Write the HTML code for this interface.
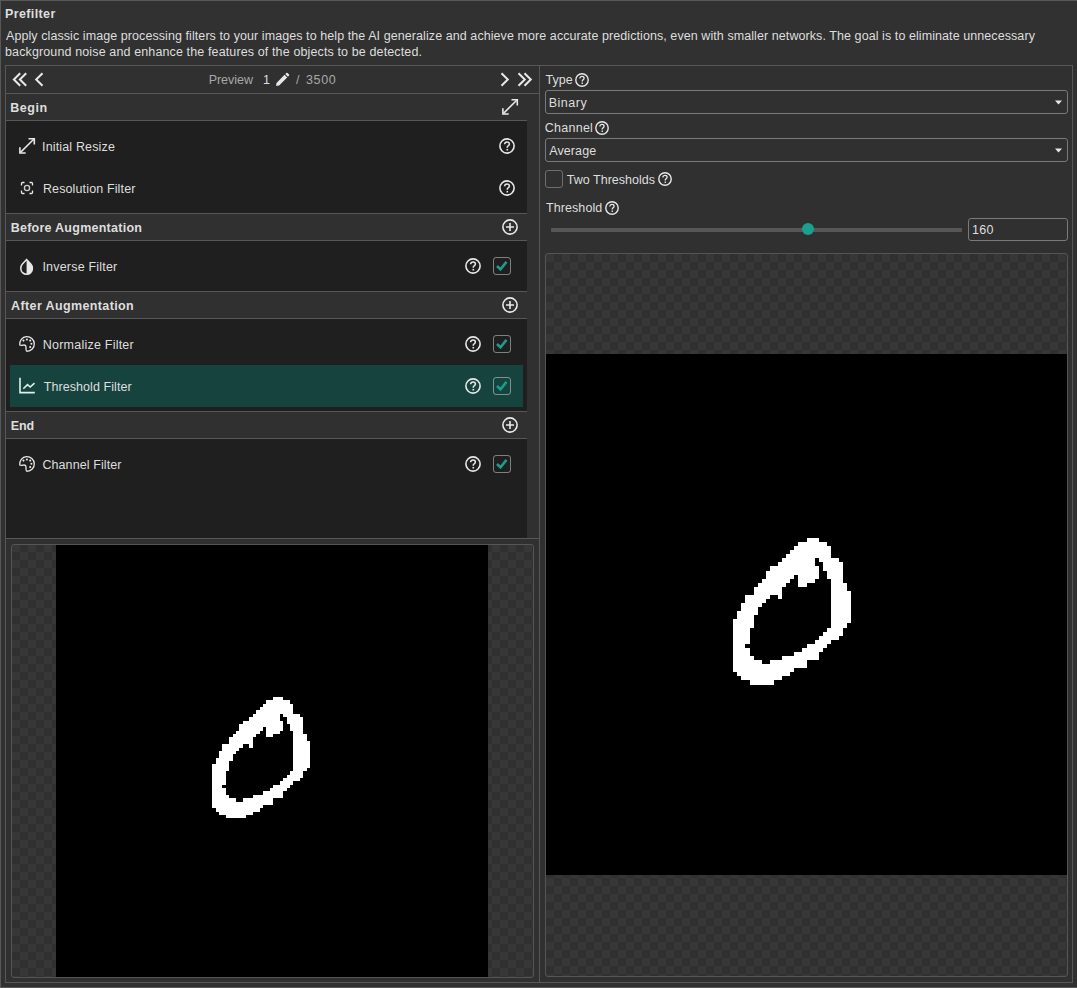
<!DOCTYPE html><html><head><meta charset="utf-8"><style>html,body{margin:0;padding:0;}body{width:1077px;height:988px;overflow:hidden;background:#313131;position:relative;font-family:"Liberation Sans",sans-serif;color:#dedede;}.a{position:absolute;}.t{position:absolute;white-space:nowrap;font-size:12.5px;line-height:16px;}svg{position:absolute;overflow:visible;}.chk{position:absolute;width:16px;height:16px;border:1px solid rgba(255,255,255,0.43);border-radius:3px;}</style></head><body>
<div class="a" style="left:0px;top:0px;width:1077px;height:1px;background:#585858;"></div>
<div class="a" style="left:0px;top:0px;width:1px;height:988px;background:#585858;"></div>
<div class="a" style="left:0px;top:987px;width:1077px;height:1px;background:#585858;"></div>
<div class="t" style="left:5.0px;top:6px;letter-spacing:0.375px;font-weight:bold;">Prefilter</div>
<div class="t" style="left:6.0px;top:28px;letter-spacing:0.077px;">Apply classic image processing filters to your images to help the AI generalize and achieve more accurate predictions, even with smaller networks. The goal is to eliminate unnecessary</div>
<div class="t" style="left:5.0px;top:44px;letter-spacing:0.127px;">background noise and enhance the features of the objects to be detected.</div>
<div class="a" style="left:5px;top:65px;width:1066px;height:916px;border:1px solid #575757;background:#303030"></div>
<div class="a" style="left:539px;top:66px;width:1px;height:916px;background:#575757;"></div>
<div class="a" style="left:6px;top:93px;width:533px;height:1px;background:#575757;"></div>
<svg style="left:10px;top:70px" width="36" height="20" viewBox="0 0 36 20"><path d="M10.2 3.3 L3.9 9.5 L10.2 15.7 M16.2 3.3 L9.9 9.5 L16.2 15.7" fill="none" stroke="#e8e8e8" stroke-width="2"/><path d="M32.5 3.3 L26.2 9.5 L32.5 15.7" fill="none" stroke="#e8e8e8" stroke-width="2"/></svg>
<svg style="left:498px;top:70px" width="36" height="20" viewBox="0 0 36 20"><path d="M3.5 3.3 L9.8 9.5 L3.5 15.7" fill="none" stroke="#e8e8e8" stroke-width="2"/><path d="M20.5 3.3 L26.8 9.5 L20.5 15.7 M26.5 3.3 L32.8 9.5 L26.5 15.7" fill="none" stroke="#e8e8e8" stroke-width="2"/></svg>
<div class="t" style="left:208.7px;top:72px;letter-spacing:-0.033px;color:#a8a8a8;">Preview</div>
<div class="t" style="left:263.0px;top:72px;">1</div>
<svg style="left:275px;top:71.5px" width="15" height="15" viewBox="0 0 16 16"><path d="M1.2 14.8 L1.6 11.6 L10.2 3 L13 5.8 L4.4 14.4 Z M11 2.2 L12.2 1 Q12.8 0.5 13.4 1 L15 2.6 Q15.5 3.2 15 3.8 L13.8 5 Z" fill="#e8e8e8"/></svg>
<div class="t" style="left:296.0px;top:72px;color:#a8a8a8;">/</div>
<div class="t" style="left:306.0px;top:72px;letter-spacing:0.667px;color:#a8a8a8;">3500</div>
<div class="a" style="left:6px;top:94px;width:533px;height:26px;background:#303030;"></div>
<div class="t" style="left:10.3px;top:100px;letter-spacing:0.5px;font-weight:bold;">Begin</div>
<svg style="left:502px;top:99px" width="17" height="17" viewBox="0 0 17 17"><path d="M1.5 14.4 L14.7 1.2" stroke="#e8e8e8" stroke-width="1.5"/><path d="M9.5 0.8 H15.3 V6.6" fill="none" stroke="#e8e8e8" stroke-width="1.6"/><path d="M0.9 9.3 V15 H6.7" fill="none" stroke="#e8e8e8" stroke-width="1.6"/></svg>
<div class="a" style="left:6px;top:120px;width:521px;height:1px;background:#575757;"></div>
<div class="a" style="left:6px;top:121px;width:521px;height:92px;background:#1f1f1f;"></div>
<svg style="left:19px;top:138px" width="17" height="17" viewBox="0 0 17 17"><path d="M1.5 14.4 L14.7 1.2" stroke="#e8e8e8" stroke-width="1.5"/><path d="M9.5 0.8 H15.3 V6.6" fill="none" stroke="#e8e8e8" stroke-width="1.6"/><path d="M0.9 9.3 V15 H6.7" fill="none" stroke="#e8e8e8" stroke-width="1.6"/></svg>
<div class="t" style="left:42.1px;top:139px;letter-spacing:0.146px;">Initial Resize</div>
<svg style="left:499.0px;top:138.0px" width="16" height="16" viewBox="0 0 16 16"><circle cx="8" cy="8" r="7.1" fill="none" stroke="#e8e8e8" stroke-width="1.6"/><path d="M5.6 6.2 C5.6 4.6 6.7 3.9 8 3.9 C9.4 3.9 10.4 4.8 10.4 6 C10.4 7.5 8.6 7.8 8.3 9 L8.3 9.8" fill="none" stroke="#e8e8e8" stroke-width="1.5"/><rect x="7.5" y="10.9" width="1.6" height="1.6" fill="#e8e8e8"/></svg>
<svg style="left:19px;top:180px" width="16" height="16" viewBox="0 0 16 16"><path d="M2.5 5.5 V3.5 Q2.5 2.5 3.5 2.5 H5.5 M10.5 2.5 H12.5 Q13.5 2.5 13.5 3.5 V5.5 M13.5 10.5 V12.5 Q13.5 13.5 12.5 13.5 H10.5 M5.5 13.5 H3.5 Q2.5 13.5 2.5 12.5 V10.5" fill="none" stroke="#e8e8e8" stroke-width="1.3"/><circle cx="8" cy="8" r="2.6" fill="none" stroke="#cfcfcf" stroke-width="1.3"/></svg>
<div class="t" style="left:42.9px;top:181px;letter-spacing:0.137px;">Resolution Filter</div>
<svg style="left:499.0px;top:180.0px" width="16" height="16" viewBox="0 0 16 16"><circle cx="8" cy="8" r="7.1" fill="none" stroke="#e8e8e8" stroke-width="1.6"/><path d="M5.6 6.2 C5.6 4.6 6.7 3.9 8 3.9 C9.4 3.9 10.4 4.8 10.4 6 C10.4 7.5 8.6 7.8 8.3 9 L8.3 9.8" fill="none" stroke="#e8e8e8" stroke-width="1.5"/><rect x="7.5" y="10.9" width="1.6" height="1.6" fill="#e8e8e8"/></svg>
<div class="a" style="left:6px;top:213px;width:521px;height:1px;background:#575757;"></div>
<div class="a" style="left:6px;top:214px;width:533px;height:26px;background:#303030;"></div>
<div class="t" style="left:10.7px;top:220px;letter-spacing:0.256px;font-weight:bold;">Before Augmentation</div>
<svg style="left:502px;top:219px" width="16" height="16" viewBox="0 0 16 16"><circle cx="8" cy="8" r="7.1" fill="none" stroke="#e8e8e8" stroke-width="1.6"/><path d="M8 4 V12 M4 8 H12" stroke="#e8e8e8" stroke-width="1.6"/></svg>
<div class="a" style="left:6px;top:240px;width:521px;height:1px;background:#575757;"></div>
<div class="a" style="left:6px;top:241px;width:521px;height:50px;background:#1f1f1f;"></div>
<svg style="left:19px;top:258px" width="16" height="18" viewBox="0 0 16 18"><path d="M7.6 1.6 L3.4 5.9 Q1.8 7.6 1.8 10.4 Q1.8 13 3.5 14.6 Q5.2 16.25 7.6 16.25 Q10 16.25 11.7 14.6 Q13.4 13 13.4 10.4 Q13.4 7.6 11.8 5.9 Z" fill="none" stroke="#e8e8e8" stroke-width="1.5"/><path d="M7.6 1.6 L11.8 5.9 Q13.4 7.6 13.4 10.4 Q13.4 13 11.7 14.6 Q10 16.25 7.6 16.25 Z" fill="#e8e8e8"/></svg>
<div class="t" style="left:42.4px;top:259px;letter-spacing:0.2px;">Inverse Filter</div>
<svg style="left:465.0px;top:258.0px" width="16" height="16" viewBox="0 0 16 16"><circle cx="8" cy="8" r="7.1" fill="none" stroke="#e8e8e8" stroke-width="1.6"/><path d="M5.6 6.2 C5.6 4.6 6.7 3.9 8 3.9 C9.4 3.9 10.4 4.8 10.4 6 C10.4 7.5 8.6 7.8 8.3 9 L8.3 9.8" fill="none" stroke="#e8e8e8" stroke-width="1.5"/><rect x="7.5" y="10.9" width="1.6" height="1.6" fill="#e8e8e8"/></svg>
<div class="chk" style="left:493px;top:257px;"></div>
<svg style="left:493px;top:257px" width="18" height="18" viewBox="0 0 18 18"><path d="M4 9 L7.5 12.3 L13.5 4.9" fill="none" stroke="#1c9c8c" stroke-width="2.6"/></svg>
<div class="a" style="left:6px;top:291px;width:521px;height:1px;background:#575757;"></div>
<div class="a" style="left:6px;top:292px;width:533px;height:26px;background:#303030;"></div>
<div class="t" style="left:11.1px;top:298px;letter-spacing:0.376px;font-weight:bold;">After Augmentation</div>
<svg style="left:502px;top:297px" width="16" height="16" viewBox="0 0 16 16"><circle cx="8" cy="8" r="7.1" fill="none" stroke="#e8e8e8" stroke-width="1.6"/><path d="M8 4 V12 M4 8 H12" stroke="#e8e8e8" stroke-width="1.6"/></svg>
<div class="a" style="left:6px;top:318px;width:521px;height:1px;background:#575757;"></div>
<div class="a" style="left:6px;top:319px;width:521px;height:92px;background:#1f1f1f;"></div>
<svg style="left:19px;top:336px" width="17" height="17" viewBox="0 0 17 17"><path d="M8 15.3 A7.3 7.3 0 1 0 0.75 8.9 C1.3 9.7 2.6 9.4 4.2 9.1 C5.9 8.8 7.1 9.4 7 11.1 C6.9 12.6 6.7 14.6 8 15.3 Z" fill="none" stroke="#e8e8e8" stroke-width="1.3"/><circle cx="4.5" cy="4.6" r="1.05" fill="#e8e8e8"/><circle cx="7.9" cy="3.5" r="1.05" fill="#e8e8e8"/><circle cx="11.2" cy="4.6" r="1.05" fill="#e8e8e8"/><circle cx="12.4" cy="7.8" r="1.05" fill="#e8e8e8"/><circle cx="11.2" cy="11.1" r="1.05" fill="#e8e8e8"/></svg>
<div class="t" style="left:42.8px;top:337px;letter-spacing:0.227px;">Normalize Filter</div>
<svg style="left:465.0px;top:336.0px" width="16" height="16" viewBox="0 0 16 16"><circle cx="8" cy="8" r="7.1" fill="none" stroke="#e8e8e8" stroke-width="1.6"/><path d="M5.6 6.2 C5.6 4.6 6.7 3.9 8 3.9 C9.4 3.9 10.4 4.8 10.4 6 C10.4 7.5 8.6 7.8 8.3 9 L8.3 9.8" fill="none" stroke="#e8e8e8" stroke-width="1.5"/><rect x="7.5" y="10.9" width="1.6" height="1.6" fill="#e8e8e8"/></svg>
<div class="chk" style="left:493px;top:335px;"></div>
<svg style="left:493px;top:335px" width="18" height="18" viewBox="0 0 18 18"><path d="M4 9 L7.5 12.3 L13.5 4.9" fill="none" stroke="#1c9c8c" stroke-width="2.6"/></svg>
<div class="a" style="left:10px;top:365px;width:513px;height:42px;background:#17433f;"></div>
<svg style="left:19px;top:378px" width="17" height="17" viewBox="0 0 17 17"><path d="M1 -0.2 V14.6 H15.8" fill="none" stroke="#dff0ec" stroke-width="1.6"/><path d="M4.3 10.7 L8.5 6.6 L11.2 9 L15.5 5.1" fill="none" stroke="#dff0ec" stroke-width="1.6"/></svg>
<div class="t" style="left:43.8px;top:379px;letter-spacing:0.067px;">Threshold Filter</div>
<svg style="left:465.0px;top:378.0px" width="16" height="16" viewBox="0 0 16 16"><circle cx="8" cy="8" r="7.1" fill="none" stroke="#e8e8e8" stroke-width="1.6"/><path d="M5.6 6.2 C5.6 4.6 6.7 3.9 8 3.9 C9.4 3.9 10.4 4.8 10.4 6 C10.4 7.5 8.6 7.8 8.3 9 L8.3 9.8" fill="none" stroke="#e8e8e8" stroke-width="1.5"/><rect x="7.5" y="10.9" width="1.6" height="1.6" fill="#e8e8e8"/></svg>
<div class="chk" style="left:493px;top:377px;"></div>
<svg style="left:493px;top:377px" width="18" height="18" viewBox="0 0 18 18"><path d="M4 9 L7.5 12.3 L13.5 4.9" fill="none" stroke="#1c9c8c" stroke-width="2.6"/></svg>
<div class="a" style="left:6px;top:411px;width:521px;height:1px;background:#575757;"></div>
<div class="a" style="left:6px;top:412px;width:533px;height:26px;background:#303030;"></div>
<div class="t" style="left:10.7px;top:418px;letter-spacing:-0.05px;font-weight:bold;">End</div>
<svg style="left:502px;top:417px" width="16" height="16" viewBox="0 0 16 16"><circle cx="8" cy="8" r="7.1" fill="none" stroke="#e8e8e8" stroke-width="1.6"/><path d="M8 4 V12 M4 8 H12" stroke="#e8e8e8" stroke-width="1.6"/></svg>
<div class="a" style="left:6px;top:438px;width:521px;height:1px;background:#575757;"></div>
<div class="a" style="left:6px;top:439px;width:521px;height:99px;background:#1f1f1f;"></div>
<svg style="left:19px;top:456px" width="17" height="17" viewBox="0 0 17 17"><path d="M8 15.3 A7.3 7.3 0 1 0 0.75 8.9 C1.3 9.7 2.6 9.4 4.2 9.1 C5.9 8.8 7.1 9.4 7 11.1 C6.9 12.6 6.7 14.6 8 15.3 Z" fill="none" stroke="#e8e8e8" stroke-width="1.3"/><circle cx="4.5" cy="4.6" r="1.05" fill="#e8e8e8"/><circle cx="7.9" cy="3.5" r="1.05" fill="#e8e8e8"/><circle cx="11.2" cy="4.6" r="1.05" fill="#e8e8e8"/><circle cx="12.4" cy="7.8" r="1.05" fill="#e8e8e8"/><circle cx="11.2" cy="11.1" r="1.05" fill="#e8e8e8"/></svg>
<div class="t" style="left:42.4px;top:457px;letter-spacing:0.1px;">Channel Filter</div>
<svg style="left:465.0px;top:456.0px" width="16" height="16" viewBox="0 0 16 16"><circle cx="8" cy="8" r="7.1" fill="none" stroke="#e8e8e8" stroke-width="1.6"/><path d="M5.6 6.2 C5.6 4.6 6.7 3.9 8 3.9 C9.4 3.9 10.4 4.8 10.4 6 C10.4 7.5 8.6 7.8 8.3 9 L8.3 9.8" fill="none" stroke="#e8e8e8" stroke-width="1.5"/><rect x="7.5" y="10.9" width="1.6" height="1.6" fill="#e8e8e8"/></svg>
<div class="chk" style="left:493px;top:455px;"></div>
<svg style="left:493px;top:455px" width="18" height="18" viewBox="0 0 18 18"><path d="M4 9 L7.5 12.3 L13.5 4.9" fill="none" stroke="#1c9c8c" stroke-width="2.6"/></svg>
<div class="a" style="left:6px;top:538px;width:521px;height:1px;background:#575757;"></div>
<div class="a" style="left:6px;top:538px;width:534px;height:1px;background:#575757;"></div>
<div class="a" style="left:12px;top:545px;width:521px;height:432px;border-radius:2px;background:repeating-conic-gradient(#303030 0 25%,#373737 0 50%) 0px 15px/16px 16px;"></div>
<svg style="left:56px;top:545px" width="432" height="432" viewBox="0 0 128 128" shape-rendering="crispEdges"><rect width="128" height="128" fill="#000"/><g fill="#fff"><rect x="64.3" y="45.0" width="3" height="1"/><rect x="62.3" y="46.0" width="7" height="1"/><rect x="61.3" y="47.0" width="9" height="1"/><rect x="60.3" y="48.0" width="10" height="1"/><rect x="59.3" y="49.0" width="11" height="1"/><rect x="58.3" y="50.0" width="8" height="1"/><rect x="67.3" y="50.0" width="5" height="1"/><rect x="57.3" y="51.0" width="9" height="1"/><rect x="68.3" y="51.0" width="5" height="1"/><rect x="55.3" y="52.0" width="12" height="1"/><rect x="68.3" y="52.0" width="5" height="1"/><rect x="54.3" y="53.0" width="13" height="1"/><rect x="69.3" y="53.0" width="4" height="1"/><rect x="54.3" y="54.0" width="7" height="1"/><rect x="62.3" y="54.0" width="5" height="1"/><rect x="69.3" y="54.0" width="4" height="1"/><rect x="53.3" y="55.0" width="7" height="1"/><rect x="62.3" y="55.0" width="4" height="1"/><rect x="70.3" y="55.0" width="3" height="1"/><rect x="52.3" y="56.0" width="7" height="1"/><rect x="62.3" y="56.0" width="2" height="1"/><rect x="70.3" y="56.0" width="4" height="1"/><rect x="51.3" y="57.0" width="7" height="1"/><rect x="70.3" y="57.0" width="4" height="1"/><rect x="51.3" y="58.0" width="7" height="1"/><rect x="70.3" y="58.0" width="5" height="1"/><rect x="49.3" y="59.0" width="6" height="1"/><rect x="57.3" y="59.0" width="1" height="1"/><rect x="70.3" y="59.0" width="5" height="1"/><rect x="49.3" y="60.0" width="5" height="1"/><rect x="70.3" y="60.0" width="5" height="1"/><rect x="48.3" y="61.0" width="5" height="1"/><rect x="70.3" y="61.0" width="5" height="1"/><rect x="48.3" y="62.0" width="4" height="1"/><rect x="70.3" y="62.0" width="5" height="1"/><rect x="47.3" y="63.0" width="5" height="1"/><rect x="70.3" y="63.0" width="5" height="1"/><rect x="47.3" y="64.0" width="4" height="1"/><rect x="70.3" y="64.0" width="5" height="1"/><rect x="46.3" y="65.0" width="5" height="1"/><rect x="70.3" y="65.0" width="5" height="1"/><rect x="46.3" y="66.0" width="5" height="1"/><rect x="70.3" y="66.0" width="4" height="1"/><rect x="46.3" y="67.0" width="4" height="1"/><rect x="69.3" y="67.0" width="4" height="1"/><rect x="46.3" y="68.0" width="4" height="1"/><rect x="68.3" y="68.0" width="5" height="1"/><rect x="46.3" y="69.0" width="4" height="1"/><rect x="67.3" y="69.0" width="5" height="1"/><rect x="46.3" y="70.0" width="4" height="1"/><rect x="66.3" y="70.0" width="4" height="1"/><rect x="46.3" y="71.0" width="3" height="1"/><rect x="64.3" y="71.0" width="5" height="1"/><rect x="46.3" y="72.0" width="4" height="1"/><rect x="63.3" y="72.0" width="5" height="1"/><rect x="46.3" y="73.0" width="4" height="1"/><rect x="61.3" y="73.0" width="6" height="1"/><rect x="46.3" y="74.0" width="5" height="1"/><rect x="58.3" y="74.0" width="9" height="1"/><rect x="46.3" y="75.0" width="7" height="1"/><rect x="55.3" y="75.0" width="9" height="1"/><rect x="46.3" y="76.0" width="18" height="1"/><rect x="46.3" y="77.0" width="15" height="1"/><rect x="47.3" y="78.0" width="13" height="1"/><rect x="48.3" y="79.0" width="10" height="1"/><rect x="50.3" y="80.0" width="6" height="1"/></g></svg>
<div class="a" style="left:11px;top:544px;width:521px;height:432px;border:1px solid #555555;border-radius:3px;"></div>
<div class="t" style="left:545.4px;top:72px;letter-spacing:0.067px;">Type</div>
<svg style="left:575.0px;top:73.0px" width="14" height="14" viewBox="0 0 16 16"><circle cx="8" cy="8" r="7.1" fill="none" stroke="#e8e8e8" stroke-width="1.6"/><path d="M5.6 6.2 C5.6 4.6 6.7 3.9 8 3.9 C9.4 3.9 10.4 4.8 10.4 6 C10.4 7.5 8.6 7.8 8.3 9 L8.3 9.8" fill="none" stroke="#e8e8e8" stroke-width="1.5"/><rect x="7.5" y="10.9" width="1.6" height="1.6" fill="#e8e8e8"/></svg>
<div class="a" style="left:545px;top:90px;width:521px;height:22px;border:1px solid #7a7a7a;border-radius:3px;"></div>
<div class="t" style="left:548.7px;top:95px;letter-spacing:0.52px;">Binary</div>
<svg style="left:1054px;top:99.7px" width="9" height="6" viewBox="0 0 9 6"><path d="M1 0.5 H8 L4.5 4.5 Z" fill="#e8e8e8"/></svg>
<div class="t" style="left:544.8px;top:120px;letter-spacing:0.25px;">Channel</div>
<svg style="left:595.0px;top:121.0px" width="14" height="14" viewBox="0 0 16 16"><circle cx="8" cy="8" r="7.1" fill="none" stroke="#e8e8e8" stroke-width="1.6"/><path d="M5.6 6.2 C5.6 4.6 6.7 3.9 8 3.9 C9.4 3.9 10.4 4.8 10.4 6 C10.4 7.5 8.6 7.8 8.3 9 L8.3 9.8" fill="none" stroke="#e8e8e8" stroke-width="1.5"/><rect x="7.5" y="10.9" width="1.6" height="1.6" fill="#e8e8e8"/></svg>
<div class="a" style="left:545px;top:138px;width:521px;height:22px;border:1px solid #7a7a7a;border-radius:3px;"></div>
<div class="t" style="left:549.3px;top:143px;letter-spacing:0.083px;">Average</div>
<svg style="left:1054px;top:147.7px" width="9" height="6" viewBox="0 0 9 6"><path d="M1 0.5 H8 L4.5 4.5 Z" fill="#e8e8e8"/></svg>
<div class="chk" style="left:545px;top:170px;border-color:#6e6e6e"></div>
<div class="t" style="left:566.8px;top:172px;letter-spacing:0.015px;">Two Thresholds</div>
<svg style="left:658.0px;top:172.0px" width="14" height="14" viewBox="0 0 16 16"><circle cx="8" cy="8" r="7.1" fill="none" stroke="#e8e8e8" stroke-width="1.6"/><path d="M5.6 6.2 C5.6 4.6 6.7 3.9 8 3.9 C9.4 3.9 10.4 4.8 10.4 6 C10.4 7.5 8.6 7.8 8.3 9 L8.3 9.8" fill="none" stroke="#e8e8e8" stroke-width="1.5"/><rect x="7.5" y="10.9" width="1.6" height="1.6" fill="#e8e8e8"/></svg>
<div class="t" style="left:545.9px;top:200px;letter-spacing:0.1px;">Threshold</div>
<svg style="left:605.0px;top:201.0px" width="14" height="14" viewBox="0 0 16 16"><circle cx="8" cy="8" r="7.1" fill="none" stroke="#e8e8e8" stroke-width="1.6"/><path d="M5.6 6.2 C5.6 4.6 6.7 3.9 8 3.9 C9.4 3.9 10.4 4.8 10.4 6 C10.4 7.5 8.6 7.8 8.3 9 L8.3 9.8" fill="none" stroke="#e8e8e8" stroke-width="1.5"/><rect x="7.5" y="10.9" width="1.6" height="1.6" fill="#e8e8e8"/></svg>
<div class="a" style="left:551px;top:228px;width:411px;height:4px;background:#575757;border-radius:1px;"></div>
<div class="a" style="left:801.6px;top:222.6px;width:12.8px;height:12.8px;border-radius:50%;background:#19a091;"></div>
<div class="a" style="left:968px;top:218px;width:98px;height:21px;border:1px solid #7a7a7a;border-radius:3px;"></div>
<div class="t" style="left:972.0px;top:222px;letter-spacing:0.25px;">160</div>
<div class="a" style="left:546px;top:254px;width:521px;height:722px;border-radius:2px;background:repeating-conic-gradient(#303030 0 25%,#373737 0 50%) 0px 0px/16px 16px;"></div>
<svg style="left:546px;top:354px" width="521" height="521" viewBox="0 0 128 128" shape-rendering="crispEdges"><rect width="128" height="128" fill="#000"/><g fill="#fff"><rect x="64.0" y="45.2" width="3" height="1"/><rect x="62.0" y="46.2" width="7" height="1"/><rect x="61.0" y="47.2" width="9" height="1"/><rect x="60.0" y="48.2" width="10" height="1"/><rect x="59.0" y="49.2" width="11" height="1"/><rect x="58.0" y="50.2" width="8" height="1"/><rect x="67.0" y="50.2" width="5" height="1"/><rect x="57.0" y="51.2" width="9" height="1"/><rect x="68.0" y="51.2" width="5" height="1"/><rect x="55.0" y="52.2" width="12" height="1"/><rect x="68.0" y="52.2" width="5" height="1"/><rect x="54.0" y="53.2" width="13" height="1"/><rect x="69.0" y="53.2" width="4" height="1"/><rect x="54.0" y="54.2" width="7" height="1"/><rect x="62.0" y="54.2" width="5" height="1"/><rect x="69.0" y="54.2" width="4" height="1"/><rect x="53.0" y="55.2" width="7" height="1"/><rect x="62.0" y="55.2" width="4" height="1"/><rect x="70.0" y="55.2" width="3" height="1"/><rect x="52.0" y="56.2" width="7" height="1"/><rect x="62.0" y="56.2" width="2" height="1"/><rect x="70.0" y="56.2" width="4" height="1"/><rect x="51.0" y="57.2" width="7" height="1"/><rect x="70.0" y="57.2" width="4" height="1"/><rect x="51.0" y="58.2" width="7" height="1"/><rect x="70.0" y="58.2" width="5" height="1"/><rect x="49.0" y="59.2" width="6" height="1"/><rect x="57.0" y="59.2" width="1" height="1"/><rect x="70.0" y="59.2" width="5" height="1"/><rect x="49.0" y="60.2" width="5" height="1"/><rect x="70.0" y="60.2" width="5" height="1"/><rect x="48.0" y="61.2" width="5" height="1"/><rect x="70.0" y="61.2" width="5" height="1"/><rect x="48.0" y="62.2" width="4" height="1"/><rect x="70.0" y="62.2" width="5" height="1"/><rect x="47.0" y="63.2" width="5" height="1"/><rect x="70.0" y="63.2" width="5" height="1"/><rect x="47.0" y="64.2" width="4" height="1"/><rect x="70.0" y="64.2" width="5" height="1"/><rect x="46.0" y="65.2" width="5" height="1"/><rect x="70.0" y="65.2" width="5" height="1"/><rect x="46.0" y="66.2" width="5" height="1"/><rect x="70.0" y="66.2" width="4" height="1"/><rect x="46.0" y="67.2" width="4" height="1"/><rect x="69.0" y="67.2" width="4" height="1"/><rect x="46.0" y="68.2" width="4" height="1"/><rect x="68.0" y="68.2" width="5" height="1"/><rect x="46.0" y="69.2" width="4" height="1"/><rect x="67.0" y="69.2" width="5" height="1"/><rect x="46.0" y="70.2" width="4" height="1"/><rect x="66.0" y="70.2" width="4" height="1"/><rect x="46.0" y="71.2" width="3" height="1"/><rect x="64.0" y="71.2" width="5" height="1"/><rect x="46.0" y="72.2" width="4" height="1"/><rect x="63.0" y="72.2" width="5" height="1"/><rect x="46.0" y="73.2" width="4" height="1"/><rect x="61.0" y="73.2" width="6" height="1"/><rect x="46.0" y="74.2" width="5" height="1"/><rect x="58.0" y="74.2" width="9" height="1"/><rect x="46.0" y="75.2" width="7" height="1"/><rect x="55.0" y="75.2" width="9" height="1"/><rect x="46.0" y="76.2" width="18" height="1"/><rect x="46.0" y="77.2" width="15" height="1"/><rect x="47.0" y="78.2" width="13" height="1"/><rect x="48.0" y="79.2" width="10" height="1"/><rect x="50.0" y="80.2" width="6" height="1"/></g></svg>
<div class="a" style="left:545px;top:253px;width:521px;height:722px;border:1px solid #555555;border-radius:3px;"></div>
</body></html>
